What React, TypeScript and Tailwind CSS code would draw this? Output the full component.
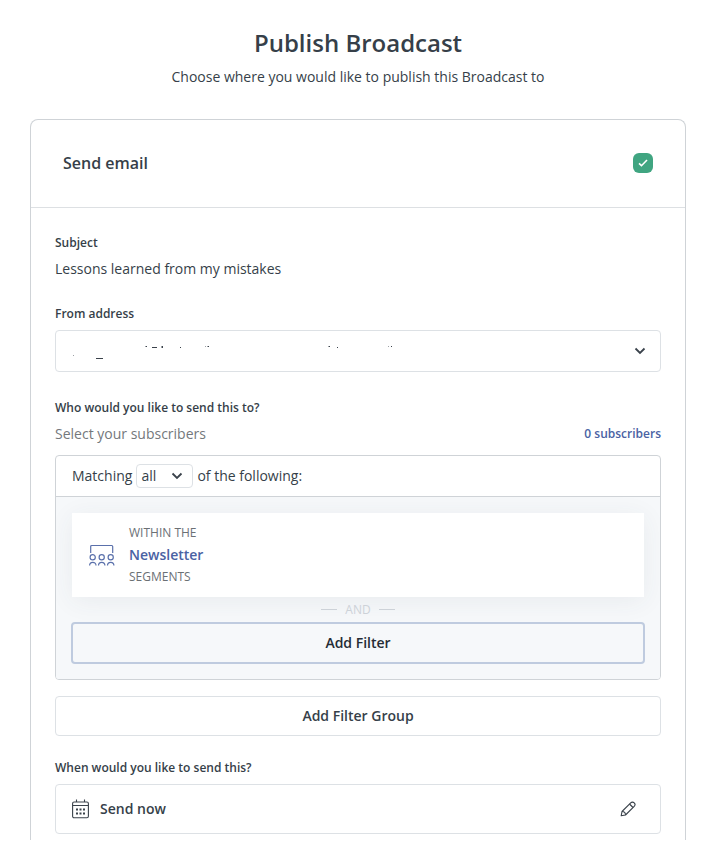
import { ReactNode } from "react";

function ChevronDown({ className }: { className: string }) {
  return (
    <svg className={className} viewBox="0 0 12 8" width="12" height="8" fill="none" aria-hidden="true">
      <path d="M1.5 1.5 6 6l4.500-4.500" stroke="#3a424b" strokeWidth="1.800" />
    </svg>
  );
}

function SegmentIcon() {
  return (
    <svg viewBox="0 0 26 22" width="26" height="22" fill="none" stroke="#5a70ab" strokeWidth="1.200" aria-hidden="true">
      <path d="M1.700 9V2.500a1 1 0 0 1 1-1h20a1 1 0 0 1 1 1V9" />
      <circle cx="3.700" cy="13.300" r="2.600" />
      <circle cx="12.700" cy="13.300" r="2.600" />
      <circle cx="21.700" cy="13.300" r="2.600" />
      <path d="M.6 21.500c0-2 1.400-3.200 3.200-3.200S7 19.500 7 21.500M9.500 21.500c0-2 1.400-3.200 3.200-3.200s3.200 1.200 3.200 3.200M18.500 21.500c0-2 1.400-3.200 3.200-3.200s3.200 1.200 3.200 3.200" />
    </svg>
  );
}

function CalendarIcon() {
  return (
    <svg viewBox="0 0 18 20" width="18" height="20" fill="none" stroke="#3a424b" aria-hidden="true">
      <rect x=".6" y="3" width="15.800" height="15.800" rx="1.500" strokeWidth="1.100" />
      <path d="M.6 6.500h15.800M4.500.5V3M12.500.5V3" strokeWidth="1.100" />
      <path d="M4 10.500h2M7.500 10.500h2M11 10.500h2M4 14.500h2M7.500 14.500h2M11 14.500h2" strokeWidth="2" />
    </svg>
  );
}

function PencilIcon() {
  return (
    <svg viewBox="0 0 16 16" width="16" height="16" fill="none" stroke="#3a424b" strokeWidth="1.100" strokeLinejoin="round" aria-hidden="true">
      <path d="m1.200 14.800.8-4.300 8.700-8.700a2.200 2.200 0 0 1 3.500 3.500L5.500 14l-4.300.8Z" />
      <path d="m9.500 3 3.500 3.500M2 10.500c2 0 3.500 1.500 3.500 3.500" />
    </svg>
  );
}

function FieldTitle({ children }: { children: ReactNode }) {
  return <h2 className="text-[12px] leading-5 font-semibold">{children}</h2>;
}

export default function App() {
  return (
    <main className="bg-white pt-[23px] pr-[27px] pl-[30px] font-['Open_Sans','Noto_Sans',sans-serif] text-[14px] leading-5 text-[#363f49]">
      <header className="text-center">
        <h1 className="text-[24px] leading-10 font-semibold">Publish Broadcast</h1>
        <p className="mt-1">Choose where you would like to publish this Broadcast to</p>
      </header>

      <section className="mt-8 rounded-t-lg border border-b-0 border-[#cfd3d7]">
        <div className="flex items-center justify-between border-b border-[#dde0e3] px-8 pt-[31px] pb-8">
          <label htmlFor="send-email" className="text-[16px] leading-6 font-semibold">
            Send email
          </label>
          <span className="grid size-5 place-items-center">
            <input
              id="send-email"
              type="checkbox"
              defaultChecked
              className="col-start-1 row-start-1 size-5 appearance-none rounded-[6px] bg-[#40a581]"
            />
            <svg className="pointer-events-none col-start-1 row-start-1" viewBox="0 0 10 8" width="10" height="8" fill="none" aria-hidden="true">
              <path d="m1 4.300 2.500 2.400L9 1" stroke="white" strokeWidth="1.600" />
            </svg>
          </span>
        </div>

        <div className="px-6 pt-[25px] pb-[6px]">
          <FieldTitle>Subject</FieldTitle>
          <p className="mt-[6px]">Lessons learned from my mistakes</p>

          <div className="mt-[25px]">
            <label htmlFor="from" className="block text-[12px] leading-5 font-semibold">
              From address
            </label>
            <div className="mt-[6px] grid items-center">
              <select
                id="from"
                className="col-start-1 row-start-1 h-[42px] w-full appearance-none rounded border border-[#dde1e5] bg-white px-4"
              >
                <option value="" />
              </select>
              <svg className="pointer-events-none col-start-1 row-start-1 ml-4" width="340" height="20" viewBox="0 0 340 20" fill="#3a424b" aria-hidden="true">
                <path d="M25 17h7v1h-7zM75 5h1v1h-1zM81 6h5v1h-5zM91 5h1v2h-1zM109 6h1v1h-1zM137 5h1v1h-1zM258 5h1v1h-1zM266 6h1v1h-1zM320 5h1v1h-1z" />
                <path d="M2 14h1v1h-1zM74 5h1v1h-1zM90 5h1v2h-1zM134 5h1v1h-1zM136 5h1v1h-1zM257 5h1v1h-1zM317 5h1v1h-1z" opacity=".5" />
              </svg>
              <ChevronDown className="pointer-events-none col-start-1 row-start-1 mr-[15px] justify-self-end" />
            </div>
          </div>

          <div className="mt-[26px]">
            <FieldTitle>Who would you like to send this to?</FieldTitle>
            <div className="mt-[6px] flex items-center justify-between">
              <p className="text-[#74787c]">Select your subscribers</p>
              <a href="#" className="text-[12px] font-semibold text-[#4a62a3]">
                0 subscribers
              </a>
            </div>
          </div>

          <div className="mt-[11px] overflow-hidden rounded border border-[#cfd3d7]">
            <div className="flex h-[41px] items-center gap-1 border-b border-[#cfd3d7] px-4">
              <label htmlFor="match">Matching</label>
              <div className="grid items-center">
                <select
                  id="match"
                  className="col-start-1 row-start-1 h-6 w-[57px] appearance-none rounded border border-[#dde1e5] bg-white pl-1"
                >
                  <option>all</option>
                  <option>any</option>
                </select>
                <ChevronDown className="pointer-events-none col-start-1 row-start-1 mr-[10px] justify-self-end" />
              </div>
              <span>of the following:</span>
            </div>

            <div className="bg-[#f6f8fa] px-[15px] pt-4 pb-[15px]">
              <div className="mx-px flex h-[84px] items-center gap-[14px] bg-white pl-[17px] shadow-[0_4px_24px_rgba(50,70,90,0.07)]">
                <SegmentIcon />
                <div className="leading-[22px]">
                  <p className="text-[12px] leading-[22px] text-[#6b7075]">WITHIN THE</p>
                  <a href="#" className="block font-semibold text-[#4a62a3]">
                    Newsletter
                  </a>
                  <p className="text-[12px] leading-[22px] text-[#6b7075]">SEGMENTS</p>
                </div>
              </div>
              <div className="flex h-[25px] items-center justify-center gap-2 text-[12px] text-[#cdd2d8]">
                <span className="h-px w-4 bg-[#cdd2d8]" />
                AND
                <span className="h-px w-4 bg-[#cdd2d8]" />
              </div>
              <button type="button" className="relative block h-[42px] w-full rounded border-2 border-[#bfcbdf] bg-[#f6f8fa] font-semibold text-[#252c35]">
                Add Filter
              </button>
            </div>
          </div>

          <button type="button" className="mt-4 block h-10 w-full rounded border border-[#dde1e5] font-semibold">
            Add Filter Group
          </button>

          <div className="mt-[22px]">
            <FieldTitle>When would you like to send this?</FieldTitle>
            <button
              type="button"
              className="mt-[6px] flex h-[50px] w-full items-center rounded border border-[#dde1e5] pr-6 pl-4 font-semibold"
            >
              <CalendarIcon />
              <span className="ml-[10px] flex-1 text-left">Send now</span>
              <PencilIcon />
            </button>
          </div>
        </div>
      </section>
    </main>
  );
}
